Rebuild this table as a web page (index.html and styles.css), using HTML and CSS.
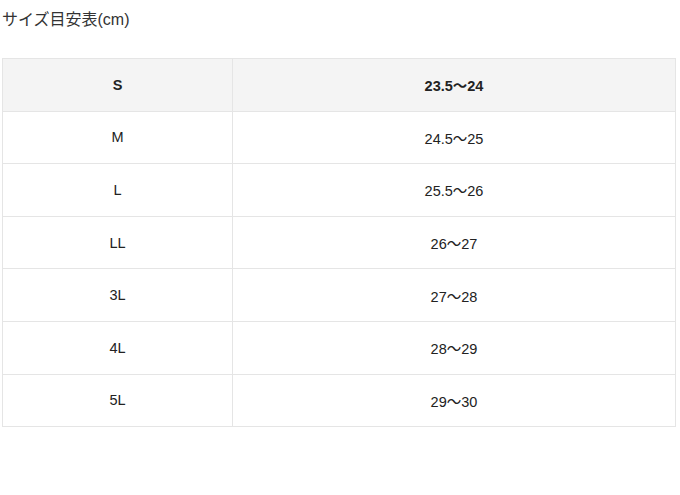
FILE: index.html
```html
<!DOCTYPE html>
<html lang="ja">
<head>
<meta charset="utf-8">
<link rel="stylesheet" href="styles.css">
</head>
<body>
<div class="wrap">
  <p class="title">サイズ目安表(cm)</p>
  <table class="size-table">
    <tr class="head"><th class="c1">S</th><th class="c2">23.5〜24</th></tr>
    <tr><td>M</td><td>24.5〜25</td></tr>
    <tr><td>L</td><td>25.5〜26</td></tr>
    <tr><td>LL</td><td>26〜27</td></tr>
    <tr><td>3L</td><td>27〜28</td></tr>
    <tr><td>4L</td><td>28〜29</td></tr>
    <tr><td>5L</td><td>29〜30</td></tr>
  </table>
</div>
</body>
</html>
```
FILE: styles.css
```css
html, body {
  margin: 0;
  padding: 0;
  background: #fff;
}
body {
  font-family: "Liberation Sans", Arial, "Noto Sans CJK JP", sans-serif;
  color: #333;
}
.wrap {
  padding: 8px 5px 0 2px;
}
.title {
  margin: 0 0 26px 0;
  font-size: 16px;
  line-height: 24px;
}
.size-table {
  width: 674px;
  border-collapse: collapse;
  font-size: 14.5px;
  color: #222;
}
.size-table th,
.size-table td {
  border: 1px solid #e5e5e5;
  height: 51.6px;
  padding: 0;
  text-align: center;
  vertical-align: middle;
}
.size-table .c1 {
  width: 229px;
}
.head th {
  background: #f4f4f4;
  font-weight: bold;
}
```
